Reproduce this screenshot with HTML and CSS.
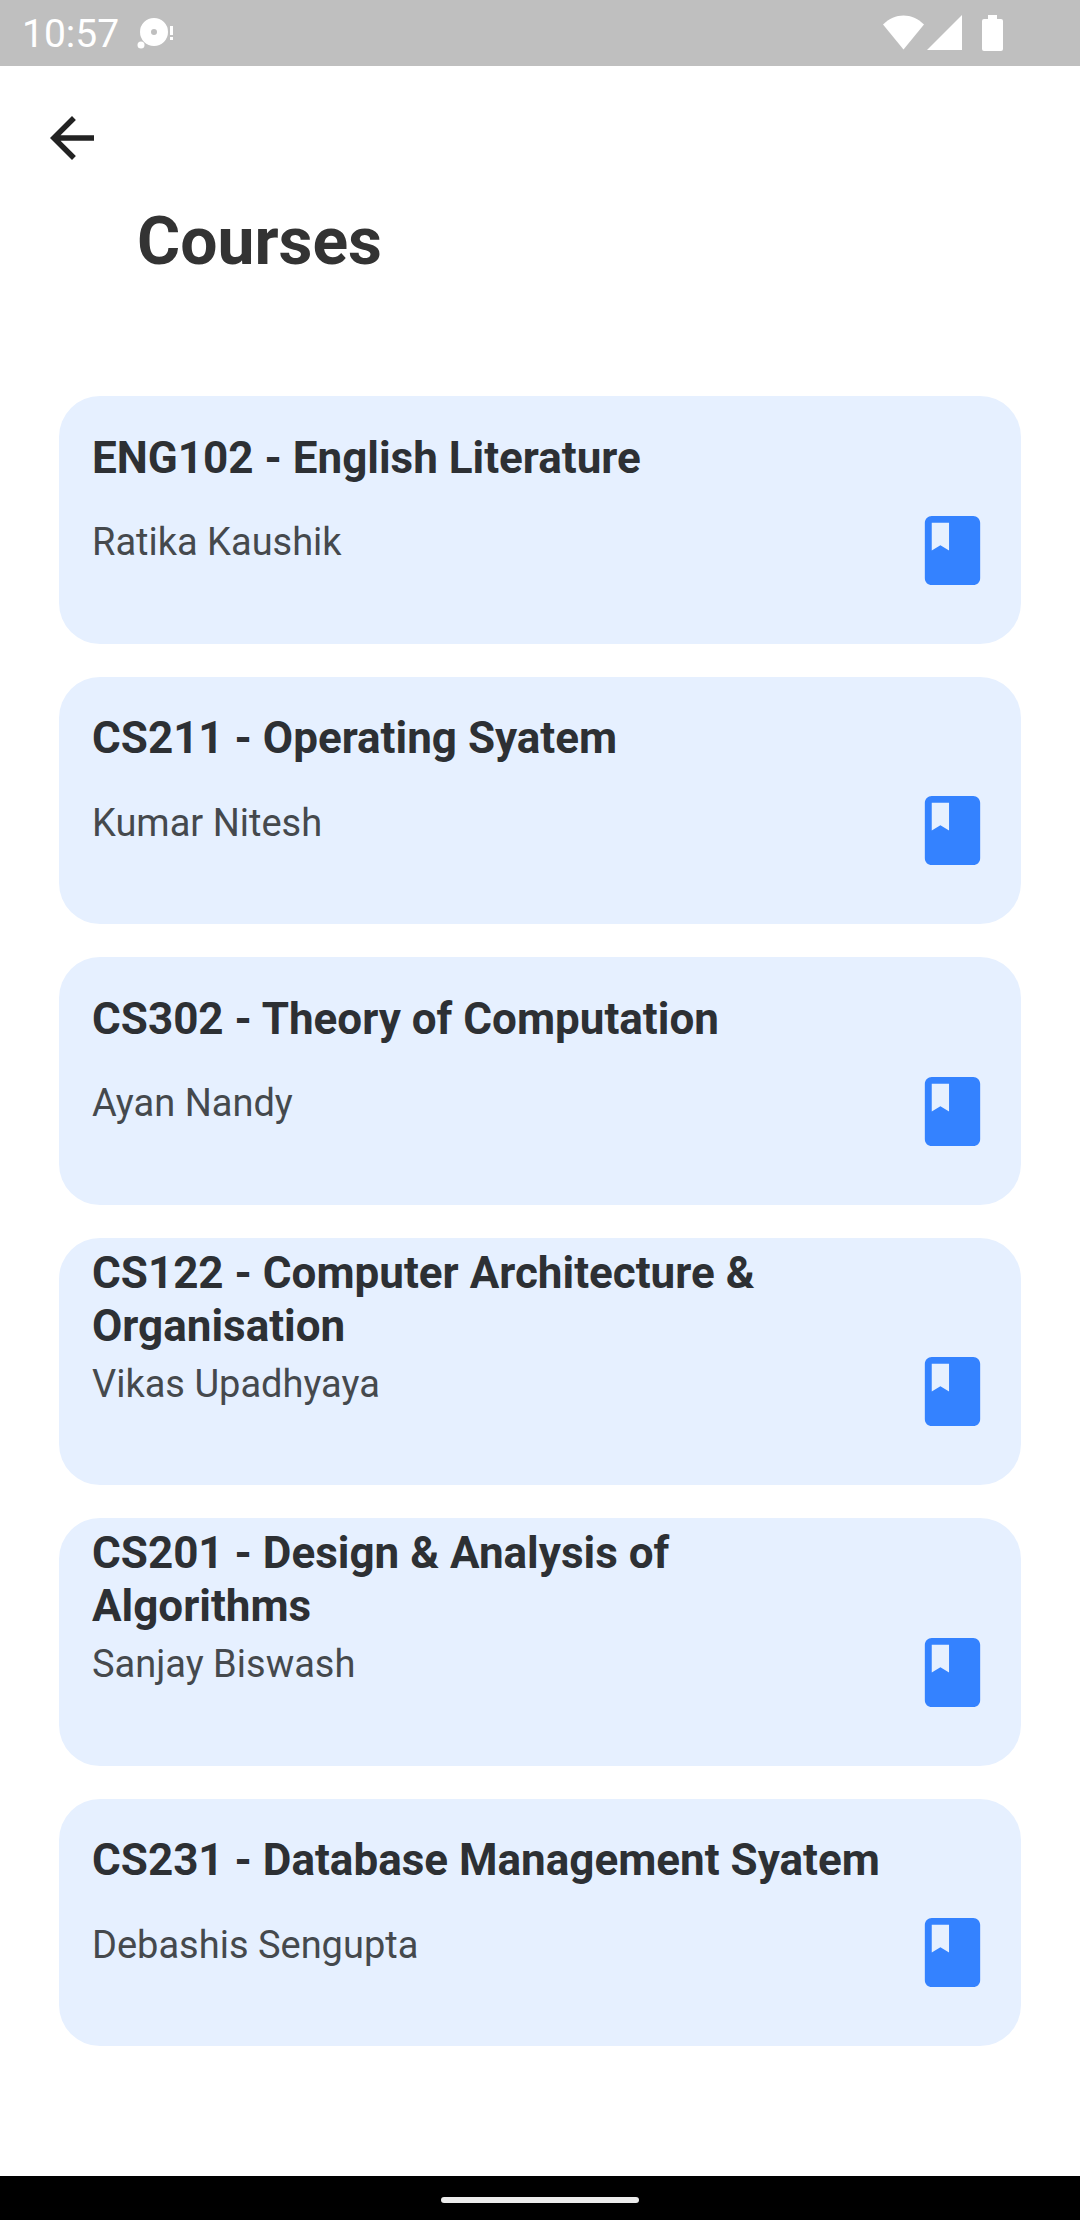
FILE: index.html
```html
<!DOCTYPE html>
<html lang="en">
<head>
<meta charset="utf-8">
<meta name="viewport" content="width=device-width, initial-scale=1">
<title>Courses</title>
<link rel="stylesheet" href="styles.css">
</head>
<body>
<svg class="defs" width="0" height="0" aria-hidden="true">
  <symbol id="book" viewBox="0 0 24 24"><path d="M18 2H6c-1.100 0-2 .9-2 2v16c0 1.100.9 2 2 2h12c1.100 0 2-.9 2-2V4c0-1.100-.9-2-2-2zM6 4h5v8l-2.500-1.500L6 12V4z"/></symbol>
</svg>
<div class="status">
  <div class="status-left">
    <time class="clock">10:57</time>
    <svg class="notice" width="38" height="36" viewBox="0 0 38 36" aria-hidden="true">
      <path fill-rule="evenodd" d="M17 3a14 14 0 1 1 0 28a14 14 0 1 1 0-28zM17 14a3 3 0 1 0 0 6a3 3 0 1 0 0-6z"/>
      <circle cx="4" cy="30" r="3.500"/>
      <path d="M33 11h3v9h-3zM33 22h3v3h-3z"/>
    </svg>
  </div>
  <div class="status-right">
    <svg width="80" height="36" viewBox="0 0 80 36" aria-hidden="true">
      <path d="M0 9.500C12-2.500 29-2.500 41 9.500L20.500 34.500z"/>
      <path d="M79 0v35H44z"/>
    </svg>
    <svg width="21" height="36" viewBox="0 0 21 36" aria-hidden="true">
      <path d="M6 0h9v4h4a2 2 0 0 1 2 2v28a2 2 0 0 1-2 2H2a2 2 0 0 1-2-2V6a2 2 0 0 1 2-2h4z"/>
    </svg>
  </div>
</div>
<header class="header">
  <button class="back" type="button" aria-label="Back">
    <svg width="66" height="66" viewBox="0 0 24 24" aria-hidden="true"><path d="M20 11H7.830l5.590-5.590L12 4l-8 8 8 8 1.410-1.410L7.830 13H20v-2z"/></svg>
  </button>
  <h1 class="heading">Courses</h1>
</header>
<main class="courses">
  <a class="card" href="#eng102">
    <div class="info"><h2 class="title">ENG102 - English Literature</h2><p class="teacher">Ratika Kaushik</p></div>
    <svg class="book" aria-hidden="true"><use href="#book"/></svg>
  </a>
  <a class="card" href="#cs211">
    <div class="info"><h2 class="title">CS211 - Operating Syatem</h2><p class="teacher">Kumar Nitesh</p></div>
    <svg class="book" aria-hidden="true"><use href="#book"/></svg>
  </a>
  <a class="card" href="#cs302">
    <div class="info"><h2 class="title">CS302 - Theory of Computation</h2><p class="teacher">Ayan Nandy</p></div>
    <svg class="book" aria-hidden="true"><use href="#book"/></svg>
  </a>
  <a class="card" href="#cs122">
    <div class="info"><h2 class="title">CS122 - Computer Architecture &amp; Organisation</h2><p class="teacher">Vikas Upadhyaya</p></div>
    <svg class="book" aria-hidden="true"><use href="#book"/></svg>
  </a>
  <a class="card" href="#cs201">
    <div class="info"><h2 class="title">CS201 - Design &amp; Analysis of Algorithms</h2><p class="teacher">Sanjay Biswash</p></div>
    <svg class="book" aria-hidden="true"><use href="#book"/></svg>
  </a>
  <a class="card" href="#cs231">
    <div class="info"><h2 class="title">CS231 - Database Management Syatem</h2><p class="teacher">Debashis Sengupta</p></div>
    <svg class="book" aria-hidden="true"><use href="#book"/></svg>
  </a>
</main>
<footer class="navbar"><div class="pill"></div></footer>
</body>
</html>
```
FILE: styles.css
```css
* {
  box-sizing: border-box;
}

body {
  margin: 0;
  min-height: 100vh;
  display: flex;
  flex-direction: column;
  background: #fff;
  font-family: Roboto, "Liberation Sans", sans-serif;
}

h1, h2, p {
  margin: 0;
}

svg {
  display: block;
  flex: none;
}

.defs {
  position: absolute;
}

.status {
  display: flex;
  justify-content: space-between;
  align-items: center;
  height: 66px;
  padding: 0 77px 0 22px;
  background: #bfbfbf;
  color: #fff;
  fill: #fff;
}

.status-left {
  display: flex;
  align-items: center;
  gap: 18px;
}

.status-right {
  display: flex;
  gap: 19px;
}

.clock {
  padding-top: 2px;
  font-size: 39px;
  line-height: 48px;
}

.header {
  padding: 39px 39px 0;
}

.back {
  display: block;
  padding: 0;
  border: 0;
  background: none;
  fill: #222;
}

.heading {
  padding: 32px 98px 0;
  font-size: 66px;
  line-height: 77px;
  font-weight: 700;
  color: #333;
}

.courses {
  flex: 1;
  display: grid;
  grid-auto-rows: 1fr;
  gap: 33px;
  padding: 116px 59px 130px;
}

.card {
  display: flex;
  justify-content: space-between;
  gap: 22px;
  padding: 0 27px 52px 33px;
  border-radius: 41px;
  background: #e6f0ff;
  text-decoration: none;
}

.title {
  display: flex;
  align-items: center;
  min-height: 124px;
  font-size: 44px;
  line-height: 53px;
  font-weight: 700;
  color: #2d3034;
}

.teacher {
  font-size: 38px;
  line-height: 45px;
  color: #45494d;
}

.book {
  align-self: flex-end;
  width: 83px;
  height: 83px;
  fill: #3482ff;
}

.navbar {
  display: flex;
  justify-content: center;
  align-items: center;
  height: 44px;
  padding-top: 4px;
  background: #000;
}

.pill {
  width: 198px;
  height: 6px;
  border-radius: 3px;
  background: #ebebeb;
}
```
